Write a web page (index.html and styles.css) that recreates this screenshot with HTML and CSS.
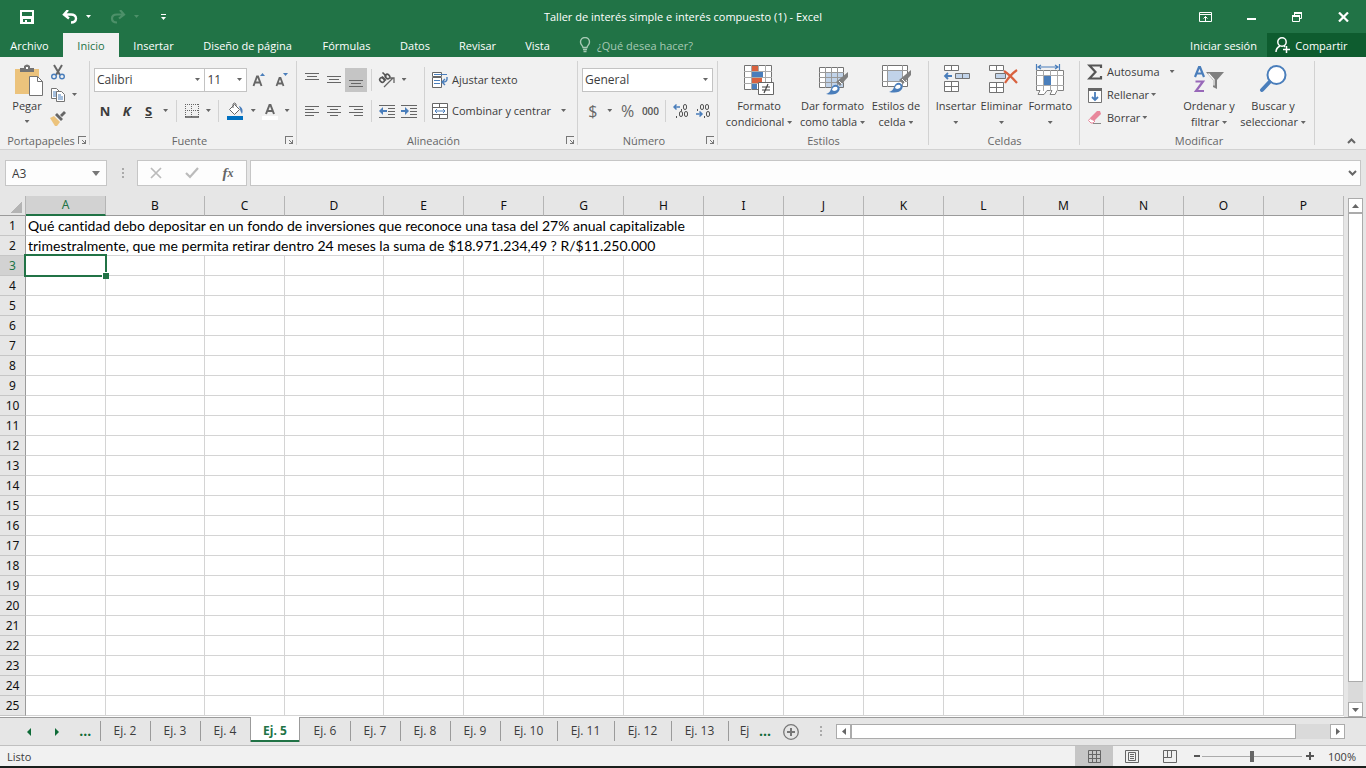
FILE: index.html
```html
<!DOCTYPE html>
<html lang="es">
<head>
<meta charset="utf-8">
<title>Taller de interés simple e interés compuesto (1) - Excel</title>
<link rel="stylesheet" href="styles.css">
</head>
<body>
<div class="app">
  <header class="titlebar">
    <div class="quick">
      <button class="q-save" aria-label="Guardar"><svg width="16" height="16" viewBox="0 0 16 16"><path d="M1 1h14v14H1z" fill="#fff"/><path d="M3 3h10v4H3zM4 10h8v3H4z" fill="#217346"/><path d="M6 11h2v2H6z" fill="#fff"/></svg></button>
      <button class="q-undo" aria-label="Deshacer"><svg width="16" height="14" viewBox="0 0 16 14"><path d="M6 0L2 4.500l5 4M2 4.500h7c3 0 5 1.500 5 4s-2 4-5 4" fill="none" stroke="#fff" stroke-width="2.400"/></svg></button>
      <button class="q-caret" aria-label="Opciones de deshacer"><svg width="5" height="3" viewBox="0 0 5 3"><path d="M0 0h5L2.500 3z" fill="#fff"/></svg></button>
      <button class="q-redo" aria-label="Rehacer"><svg width="16" height="14" viewBox="0 0 16 14"><path d="M10 0l4 4.500-5 4M14 4.500H7c-3 0-5 1.500-5 4s2 4 5 4" fill="none" stroke="#4d9069" stroke-width="2.200"/></svg></button>
      <button class="q-caret" aria-label="Opciones de rehacer"><svg width="5" height="3" viewBox="0 0 5 3"><path d="M0 0h5L2.500 3z" fill="#4d9069"/></svg></button>
      <button class="q-more" aria-label="Personalizar"><svg width="7" height="8" viewBox="0 0 7 8"><path d="M1 1.500h5" stroke="#fff"/><path d="M1 4h5L3.500 7z" fill="#fff"/></svg></button>
    </div>
    <h1 class="doc-title">Taller de interés simple e interés compuesto (1) - Excel</h1>
    <div class="window-buttons">
      <button aria-label="Opciones de la cinta"><svg width="13" height="10" viewBox="0 0 13 10"><path d="M.5 .5h12v9H.5zM0 2.500h13M6.500 9V4.500M4.500 6.500l2-2 2 2" fill="none" stroke="#fff"/></svg></button>
      <button aria-label="Minimizar"><svg width="9" height="10" viewBox="0 0 9 10"><path d="M0 6h9v2H0z" fill="#fff"/></svg></button>
      <button aria-label="Restaurar"><svg width="10" height="10" viewBox="0 0 10 10"><path d="M2.500 3V.5h7v6H7.500M.5 3.500h7v6H.5z" fill="none" stroke="#fff"/><path d="M2 1h8M0 4h8" stroke="#fff" stroke-width="2"/></svg></button>
      <button aria-label="Cerrar"><svg width="11" height="10" viewBox="0 0 11 10"><path d="M1 .5l9 9M10 .5l-9 9" stroke="#fff" stroke-width="2.200"/></svg></button>
    </div>
  </header>

  <nav class="tabs">
    <button class="tab tab-file">Archivo</button>
    <button class="tab tab-active">Inicio</button>
    <button class="tab tab-insert">Insertar</button>
    <button class="tab tab-layout">Diseño de página</button>
    <button class="tab tab-formulas">Fórmulas</button>
    <button class="tab tab-data">Datos</button>
    <button class="tab tab-review">Revisar</button>
    <button class="tab tab-view">Vista</button>
    <button class="tell-me"><svg width="12" height="16" viewBox="0 0 12 16"><path d="M4 10.500C4 8.500 1.500 8 1.500 5a4.500 4.500 0 0 1 9 0c0 3-2.500 3.500-2.500 5.500zM4 12.500h4M4.500 14.500h3" fill="none" stroke="#a6c9b4" stroke-width="1.400"/></svg>¿Qué desea hacer?</button>
    <button class="sign-in">Iniciar sesión</button>
    <button class="share"><svg width="15" height="16" viewBox="0 0 15 16"><circle cx="7" cy="5" r="4.200" fill="none" stroke="#fff" stroke-width="1.500"/><path d="M1 15c0-3 2-5 4-6M9 9l1 1M8 12.500h7M11.500 9v7" fill="none" stroke="#fff" stroke-width="1.500"/></svg>Compartir</button>
  </nav>

  <section class="ribbon">
    <div class="group g-clip">
      <div class="body">
        <button class="big paste"><svg width="32" height="32" viewBox="0 0 32 32"><path d="M4 5h24v25H4z" fill="#ecc37c"/><path d="M9 8V4h4V2q3-3 6 0v2h4v4z" fill="#737373"/><path d="M15 3h2v2h-2z" fill="#fff"/><path d="M18.500 12.500h8l5 5v14h-13z" fill="#fff" stroke="#737373"/><path d="M26.500 12.500v5h5" fill="none" stroke="#737373"/></svg><span>Pegar</span><i class="caret"></i></button>
        <div class="clip-tools">
          <button aria-label="Cortar"><svg width="16" height="16" viewBox="0 0 16 16"><path d="M4 1l6 10M12 1L6 11" stroke="#666" stroke-width="2"/><circle cx="4" cy="12.500" r="2.300" fill="none" stroke="#4a7ebb" stroke-width="1.400"/><circle cx="12" cy="12.500" r="2.300" fill="none" stroke="#4a7ebb" stroke-width="1.400"/></svg></button>
          <button aria-label="Copiar"><svg width="16" height="16" viewBox="0 0 16 16"><path d="M1.500 1.500h5l3 3v7h-8z" fill="#fff" stroke="#737373"/><path d="M3 5h4M3 7h4M3 9h4" stroke="#4a7ebb"/><path d="M6.500 4.500h5l3 3v7h-8z" fill="#fff" stroke="#737373"/><path d="M8 8h3M8 10h5M8 12h5" stroke="#4a7ebb"/></svg><i class="caret"></i></button>
          <button aria-label="Copiar formato"><svg width="16" height="16" viewBox="0 0 16 16"><path d="M0 8l4-2 6 6-3 4H5z" fill="#ecc37c"/><path d="M5 5l2-2 6 6-2 2zM10 5l4-4 2 2-4 4z" fill="#666"/></svg></button>
        </div>
      </div>
      <div class="foot"><span>Portapapeles</span><button class="launch" aria-label="Opciones de portapapeles"></button></div>
    </div>

    <div class="group g-font">
      <div class="body rows">
        <div class="row">
          <select class="sel sel-font" aria-label="Fuente"><option>Calibri</option></select>
          <select class="sel sel-size" aria-label="Tamaño"><option>11</option></select>
          <button class="w24" aria-label="Aumentar tamaño"><svg width="16" height="16" viewBox="0 0 16 16"><path d="M2.500 14L6 4.500h1L10.500 14M4 10.500h5" fill="none" stroke="#666" stroke-width="1.900"/><path d="M9 4l2.500-3L14 4z" fill="#4a7ebb"/></svg></button>
          <button class="w22" aria-label="Disminuir tamaño"><svg width="16" height="16" viewBox="0 0 16 16"><path d="M2.500 14L5.500 6h1l3 8M4 11.500h4" fill="none" stroke="#666" stroke-width="1.800"/><path d="M9 1h5l-2.500 3z" fill="#4a7ebb"/></svg></button>
        </div>
        <div class="row">
          <button class="w22 fmt"><b>N</b></button>
          <button class="w22 fmt"><b><em>K</em></b></button>
          <button class="w22 fmt"><b><u>S</u></b></button>
          <button class="w12" aria-label="Subrayado"><i class="caret"></i></button>
          <i class="vsep"></i>
          <button class="w22" aria-label="Bordes"><svg width="14" height="14" viewBox="0 0 14 14"><path d="M.5 0v13M13.500 0v13M6.500 0v13M0 .5h14M0 6.500h14" stroke="#666" stroke-dasharray="1 1"/><path d="M0 13h14" stroke="#555" stroke-width="1.500"/></svg></button>
          <button class="w12" aria-label="Más bordes"><i class="caret"></i></button>
          <i class="vsep"></i>
          <button class="w24" aria-label="Color de relleno"><svg width="16" height="18" viewBox="0 0 16 18"><path d="M2.500 7.500l5-5 5 5-5 5z" fill="#fff" stroke="#666"/><path d="M6 6V2q1.500-2 3 0v2" fill="none" stroke="#666"/><path d="M12 4q5 2 3 8-2-3-2-5z" fill="#4a7ebb"/><path d="M0 14h16v4H0z" fill="#0070c0"/></svg></button>
          <button class="w12" aria-label="Más rellenos"><i class="caret"></i></button>
          <button class="w22" aria-label="Color de fuente"><svg width="16" height="18" viewBox="0 0 16 18"><path d="M4 12L7.500 3h1L12 12M5.500 9h5" fill="none" stroke="#666" stroke-width="2"/><path d="M0 14h16v4H0z" fill="#fff"/></svg></button>
          <button class="w12" aria-label="Más colores"><i class="caret"></i></button>
        </div>
      </div>
      <div class="foot"><span>Fuente</span><button class="launch" aria-label="Opciones de fuente"></button></div>
    </div>

    <div class="group g-align">
      <div class="body">
        <div class="rows">
          <div class="row">
            <button class="w22" aria-label="Alinear arriba"><svg width="14" height="14" viewBox="0 0 14 14"><path d="M0 .5h14M2 3.500h10M0 6.500h14" stroke="#666"/></svg></button>
            <button class="w22" aria-label="Alinear al medio"><svg width="14" height="14" viewBox="0 0 14 14"><path d="M0 3.500h14M2 6.500h10M0 9.500h14" stroke="#666"/></svg></button>
            <button class="w22 pressed" aria-label="Alinear abajo"><svg width="14" height="14" viewBox="0 0 14 14"><path d="M0 7.500h14M2 10.500h10M0 13.500h14" stroke="#666"/></svg></button>
            <i class="vsep"></i>
            <button class="w22" aria-label="Orientación"><svg width="18" height="16" viewBox="0 0 18 16"><g fill="none" stroke="#555" stroke-width="1.600"><ellipse cx="4" cy="8" rx="2" ry="2.500" transform="rotate(-45 4 8)"/><path d="M4 4.500l4 4"/><ellipse cx="9.500" cy="4.500" rx="2" ry="2.500" transform="rotate(-45 9.500 4.500)"/><path d="M4.500 .5l4 4"/></g><path d="M6 15L15 6M11 6h5v5" fill="none" stroke="#666" stroke-width="1.300"/></svg></button>
            <button class="w12" aria-label="Más orientaciones"><i class="caret"></i></button>
          </div>
          <div class="row">
            <button class="w22" aria-label="Izquierda"><svg width="14" height="12" viewBox="0 0 14 12"><path d="M0 1.500h14M0 4.500h9M0 7.500h14M0 10.500h9" stroke="#666"/></svg></button>
            <button class="w22" aria-label="Centrar"><svg width="14" height="12" viewBox="0 0 14 12"><path d="M0 1.500h14M3 4.500h8M0 7.500h14M3 10.500h8" stroke="#666"/></svg></button>
            <button class="w22" aria-label="Derecha"><svg width="14" height="12" viewBox="0 0 14 12"><path d="M0 1.500h14M5 4.500h9M0 7.500h14M5 10.500h9" stroke="#666"/></svg></button>
            <i class="vsep"></i>
            <button class="w22" aria-label="Disminuir sangría"><svg width="16" height="14" viewBox="0 0 16 14"><path d="M0 1.500h16M9 4.500h7M9 7.500h7M9 10.500h7M0 13.500h16" stroke="#666"/><path d="M4 3L0 7l4 4V8h4V6H4z" fill="#4a7ebb"/></svg></button>
            <button class="w22" aria-label="Aumentar sangría"><svg width="16" height="14" viewBox="0 0 16 14"><path d="M0 1.500h16M9 4.500h7M9 7.500h7M9 10.500h7M0 13.500h16" stroke="#666"/><path d="M4 3l4 4-4 4V8H0V6h4z" fill="#4a7ebb"/></svg></button>
          </div>
        </div>
        <i class="vsep tall"></i>
        <div class="rows wide">
          <button class="row lab"><svg width="16" height="16" viewBox="0 0 16 16"><path d="M.5 .5h9v4h-9zM.5 5.500h9v10h-9z" fill="#fff" stroke="#666"/><path d="M2 2.500h13M2 8.500h6M2 11.500h6" stroke="#4a7ebb"/><path d="M15 5v2q0 3-4 3M13 7l-3 3 3 3" fill="none" stroke="#4a7ebb" stroke-width="1.400"/></svg>Ajustar texto</button>
          <button class="row lab"><svg width="16" height="16" viewBox="0 0 16 16"><path d="M.5 .5h15v15H.5z" fill="#fff" stroke="#666"/><path d="M0 4.500h16M0 11.500h16M7.500 0v4.500M7.500 11.500V16" stroke="#666"/><path d="M3 8h10M5 6L3 8l2 2M11 6l2 2-2 2" fill="none" stroke="#4a7ebb"/></svg>Combinar y centrar<i class="caret far"></i></button>
        </div>
      </div>
      <div class="foot"><span>Alineación</span><button class="launch" aria-label="Opciones de alineación"></button></div>
    </div>

    <div class="group g-num">
      <div class="body rows">
        <div class="row"><select class="sel sel-num" aria-label="Formato de número"><option>General</option></select></div>
        <div class="row">
          <button class="w22 sym">$</button>
          <button class="w12" aria-label="Más monedas"><i class="caret"></i></button>
          <button class="w24 sym">%</button>
          <button class="w22 thousands">000</button>
          <i class="vsep"></i>
          <button class="w22" aria-label="Aumentar decimales"><svg width="16" height="16" viewBox="0 0 16 16"><path d="M1 4h6M3.500 1.500L1 4l2.500 2.500" fill="none" stroke="#4a7ebb" stroke-width="1.500"/><g fill="none" stroke="#555"><rect x="10.500" y="1.500" width="3" height="5" rx="1.500"/><rect x="6.500" y="8.500" width="3" height="5" rx="1.500"/><rect x="11.500" y="8.500" width="3" height="5" rx="1.500"/><path d="M8.500 6v2M3.500 13v2"/></g></svg></button>
          <button class="w22" aria-label="Disminuir decimales"><svg width="16" height="16" viewBox="0 0 16 16"><path d="M1 11h6M4.500 8.500L7 11l-2.500 2.500" fill="none" stroke="#4a7ebb" stroke-width="1.500"/><g fill="none" stroke="#555"><rect x="5.500" y="1.500" width="3" height="5" rx="1.500"/><rect x="10.500" y="1.500" width="3" height="5" rx="1.500"/><rect x="11.500" y="8.500" width="3" height="5" rx="1.500"/><path d="M2.500 6v2M9.500 13v2"/></g></svg></button>
        </div>
      </div>
      <div class="foot"><span>Número</span><button class="launch" aria-label="Opciones de número"></button></div>
    </div>

    <div class="group g-styles">
      <div class="body">
        <button class="big w74"><svg width="32" height="32" viewBox="0 0 32 32"><path d="M1.500 1.500h27v24h-27z" fill="#fff" stroke="#737373"/><path d="M1 7.500h28M1 13.500h28M1 19.500h28M8.500 1v25M15.500 1v25M22.500 1v25" stroke="#aaa"/><path d="M9 2h6v5H9zM9 14h10v5H9z" fill="#d9623f"/><path d="M9 8h11v5H9zM9 20h5v5H9z" fill="#4a7ebb"/><path d="M15.500 18.500h15v12h-15z" fill="#fff" stroke="#666"/><path d="M19 23h8M19 26h8M25 20l-4 9" stroke="#444" stroke-width="1.200"/></svg><span>Formato<br>condicional <i class="caret"></i></span></button>
        <button class="big w73"><svg width="32" height="32" viewBox="0 0 32 32"><path d="M2.500 3.500h24v20h-24z" fill="#fff" stroke="#737373"/><path d="M8 9h18v14H8z" fill="#c1d3e9"/><path d="M2 8.500h25M2 13.500h25M2 18.500h25M8.500 3v21M14.500 3v21M20.500 3v21" stroke="#999"/><path d="M31 8v5l-8 9-4-4z" fill="#808080"/><path d="M22 17l3 3" stroke="#fff"/><path d="M9 30q4-1 5-5 2-5 6-4 4 2 2 6-3 5-13 3z" fill="#4a7ebb"/><path d="M15 26q1-4 5-3 2 3-3 4z" fill="#fff"/></svg><span>Dar formato<br>como tabla <i class="caret"></i></span></button>
        <button class="big w54"><svg width="32" height="32" viewBox="0 0 32 32"><path d="M2.500 1.500h25v21h-25z" fill="#fff" stroke="#737373"/><path d="M2 6.500h26M2 17.500h26M7.500 1v22M22.500 1v22" stroke="#999"/><path d="M8 7h14v10H8z" fill="#c1d3e9"/><path d="M31 6v5l-8 9-4-4z" fill="#808080"/><path d="M22 15l3 3" stroke="#fff"/><path d="M9 28q4-1 5-5 2-5 6-4 4 2 2 6-3 5-13 3z" fill="#4a7ebb"/><path d="M15 24q1-4 5-3 2 3-3 4z" fill="#fff"/></svg><span>Estilos de<br>celda <i class="caret"></i></span></button>
      </div>
      <div class="foot"><span>Estilos</span></div>
    </div>

    <div class="group g-cells">
      <div class="body">
        <button class="big w46"><svg width="32" height="32" viewBox="0 0 32 32"><path d="M4.500 1.500h14v5h-14zM11.500 1v6M4.500 17.500h14v10h-14zM11.500 17v11M4 22.500h15" fill="#fff" stroke="#737373"/><path d="M15.500 9.500h14v5h-14zM22.500 9v6" fill="#c1d3e9" stroke="#737373"/><path d="M5 12h7M8 9l-3 3 3 3" fill="none" stroke="#4a7ebb" stroke-width="1.800"/></svg><span>Insertar<br><i class="caret"></i></span></button>
        <button class="big w46"><svg width="32" height="32" viewBox="0 0 32 32"><path d="M3.500 1.500h14v5h-14zM10.500 1v6M3.500 18.500h14v10h-14zM10.500 18v11M3 23.500h15" fill="#fff" stroke="#737373"/><path d="M9.500 9.500h10v5h-10z" fill="#c1d3e9" stroke="#737373"/><path d="M18 7q6 4 13 12M31 6q-7 5-12 13" fill="none" stroke="#d9623f" stroke-width="2.200"/></svg><span>Eliminar<br><i class="caret"></i></span></button>
        <button class="big w52"><svg width="32" height="32" viewBox="0 0 32 32"><path d="M2.500 6.500h27v20H23l-2 4h-5l2-4h-5l-3 4H4l2-4H2.500z" fill="#fff" stroke="#808080"/><path d="M2 11.500h28M2 21.500h28M9.500 6v21M16.500 6v21M23.500 6v21" stroke="#aaa"/><path d="M10 12h7v9h-7z" fill="#4a7ebb"/><path d="M2.500 0v6M25.500 0v6M4 3h20M7 1L4 3l3 2M21 1l3 2-3 2" fill="none" stroke="#4a7ebb" stroke-width="1.200"/></svg><span>Formato<br><i class="caret"></i></span></button>
      </div>
      <div class="foot"><span>Celdas</span></div>
    </div>

    <div class="group g-edit">
      <div class="body">
        <div class="edit-list">
          <button><svg width="16" height="16" viewBox="0 0 16 16"><path d="M14 4V1.500H2.500L8.500 8l-6 6.500H14V12" fill="none" stroke="#555" stroke-width="2.200"/></svg>Autosuma<i class="caret far"></i></button>
          <button><svg width="16" height="16" viewBox="0 0 16 16"><path d="M1.500 1.500h13v14h-13z" fill="#fff" stroke="#737373"/><path d="M1 1h14v3H1z" fill="#666"/><path d="M8 5v8M5 10l3 3 3-3" fill="none" stroke="#4a7ebb" stroke-width="1.800"/></svg>Rellenar<i class="caret"></i></button>
          <button><svg width="16" height="16" viewBox="0 0 16 16"><path d="M3 8l7-7h3l1 3-7 7z" fill="#e8879b"/><path d="M3 8.500L1.500 10.500 4 13h2l2-2z" fill="#fff" stroke="#e8879b"/><path d="M6 13.500h8" stroke="#888"/></svg>Borrar<i class="caret"></i></button>
        </div>
        <button class="big w58"><svg width="32" height="32" viewBox="0 0 32 32"><path d="M2 13L6 3h1l4 10M3.500 9.500h6" fill="none" stroke="#4a7ebb" stroke-width="2.200"/><path d="M2.500 17.500h7.500L3 27h8" fill="none" stroke="#9868b9" stroke-width="2.200"/><path d="M13 8h18l-7 8v9l-4-2v-7z" fill="#808080"/><path d="M15.500 9.500l5.500 6v6" fill="none" stroke="#fff" stroke-width="1.200"/></svg><span>Ordenar y<br>filtrar <i class="caret"></i></span></button>
        <button class="big w70"><svg width="32" height="32" viewBox="0 0 32 32"><circle cx="19.500" cy="11" r="9" fill="#fff" stroke="#4a7ebb" stroke-width="2"/><path d="M12.500 18L5 26" stroke="#4a7ebb" stroke-width="4" stroke-linecap="round"/></svg><span>Buscar y<br>seleccionar <i class="caret"></i></span></button>
      </div>
      <div class="foot"><span>Modificar</span></div>
    </div>
    <button class="collapse" aria-label="Contraer la cinta"><svg width="9" height="6" viewBox="0 0 9 6"><path d="M1 5l3.500-3.500L8 5" fill="none" stroke="#666" stroke-width="2"/></svg></button>
  </section>

  <section class="formula">
    <div class="name-box"><input aria-label="Cuadro de nombres" value="A3"><button aria-label="Nombres"><svg width="8" height="5" viewBox="0 0 8 5"><path d="M0 0h8L4 5z" fill="#777"/></svg></button></div>
    <i class="dots"></i>
    <div class="fx">
      <button aria-label="Cancelar"><svg width="12" height="12" viewBox="0 0 12 12"><path d="M1 1l10 10M11 1L1 11" stroke="#bbb" stroke-width="1.700"/></svg></button>
      <button aria-label="Introducir"><svg width="14" height="12" viewBox="0 0 14 12"><path d="M1 6l4 4 8-9" fill="none" stroke="#bbb" stroke-width="2.200"/></svg></button>
      <button class="fx-btn" aria-label="Insertar función"><i>f</i><small>x</small></button>
    </div>
    <div class="formula-input"><input aria-label="Barra de fórmulas"><button aria-label="Expandir"><svg width="9" height="6" viewBox="0 0 9 6"><path d="M1 1l3.500 3.500L8 1" fill="none" stroke="#666" stroke-width="2"/></svg></button></div>
  </section>

  <main class="sheet">
    <div class="grid-area">
      <table class="grid">
        <colgroup id="cols"></colgroup>
        <thead><tr id="letters"></tr></thead>
        <tbody id="cells"></tbody>
      </table>
    </div>
    <div class="vscroll">
      <button aria-label="Subir"><svg width="7" height="4" viewBox="0 0 7 4"><path d="M0 4h7L3.500 0z" fill="#666"/></svg></button>
      <div class="vtrack"><div class="vthumb"></div></div>
      <button aria-label="Bajar"><svg width="7" height="4" viewBox="0 0 7 4"><path d="M0 0h7L3.500 4z" fill="#666"/></svg></button>
    </div>
  </main>

  <footer class="sheetbar">
    <div class="nav">
      <button aria-label="Hoja anterior"><svg width="4" height="8" viewBox="0 0 4 8"><path d="M4 0v8L0 4z" fill="#0e6b37"/></svg></button>
      <button aria-label="Hoja siguiente"><svg width="4" height="8" viewBox="0 0 4 8"><path d="M0 0v8l4-4z" fill="#0e6b37"/></svg></button>
      <button class="more">...</button>
    </div>
    <div class="sheets">
      <button>Ej. 2</button><button>Ej. 3</button><button>Ej. 4</button><button class="current">Ej. 5</button><button>Ej. 6</button><button>Ej. 7</button><button>Ej. 8</button><button>Ej. 9</button><button class="long">Ej. 10</button><button class="long">Ej. 11</button><button class="long">Ej. 12</button><button class="long">Ej. 13</button><button class="cut">Ej</button>
    </div>
    <button class="more after">...</button>
    <button class="add" aria-label="Hoja nueva"><svg width="16" height="16" viewBox="0 0 16 16"><circle cx="8" cy="8" r="7.300" fill="none" stroke="#777" stroke-width="1.300"/><path d="M4 8h8M8 4v8" stroke="#777" stroke-width="2"/></svg></button>
    <i class="dots"></i>
    <div class="hscroll">
      <button aria-label="Izquierda"><svg width="4" height="7" viewBox="0 0 4 7"><path d="M4 0v7L0 3.500z" fill="#666"/></svg></button>
      <div class="htrack"><div class="hthumb"></div></div>
      <button aria-label="Derecha"><svg width="4" height="7" viewBox="0 0 4 7"><path d="M0 0v7l4-3.500z" fill="#666"/></svg></button>
    </div>
  </footer>

  <footer class="status">
    <span class="ready">Listo</span>
    <button class="view on" aria-label="Normal"><svg width="13" height="13" viewBox="0 0 13 13"><path d="M.5 .5h12v12H.5zM4.500 0v13M8.500 0v13M0 4.500h13M0 8.500h13" fill="none" stroke="#666"/></svg></button>
    <button class="view" aria-label="Diseño de página"><svg width="14" height="13" viewBox="0 0 14 13"><path d="M.5 .5h13v12H.5zM3.500 2.500h7v8h-7zM5 4.500h4M5 6.500h4M5 8.500h4" fill="none" stroke="#666"/></svg></button>
    <button class="view" aria-label="Saltos de página"><svg width="14" height="13" viewBox="0 0 14 13"><path d="M.5 .5h13v12H.5zM.5 7.500h8V0M4.500 0v7" fill="none" stroke="#666"/></svg></button>
    <button class="zoom-step" aria-label="Alejar"><svg width="7" height="8" viewBox="0 0 7 8"><path d="M0 4h6" stroke="#555" stroke-width="2"/></svg></button>
    <input class="zoom" type="range" min="0" max="100" value="50" aria-label="Zoom">
    <button class="zoom-step" aria-label="Acercar"><svg width="8" height="8" viewBox="0 0 8 8"><path d="M0 4h8M4 0v8" stroke="#555" stroke-width="2"/></svg></button>
    <button class="percent">100%</button>
  </footer>
  <div class="edge"></div>
</div>
<script src="sheet.js"></script>
</body>
</html>
```
FILE: styles.css
```css
* { box-sizing: border-box; }
body { margin: 0; background: #e6e6e6; }
body, button, input, select { font-family: "Open Sans", "Noto Sans", sans-serif; font-size: 11px; color: #3c3c3c; }
button { display: flex; align-items: center; justify-content: center; margin: 0; padding: 0; border: 0; background: none; white-space: nowrap; }
svg { display: block; flex: none; }
.app { display: flex; flex-direction: column; height: 100vh; min-width: 1344px; overflow: hidden; }

.titlebar { display: grid; grid-template-columns: 1fr auto 1fr; align-items: center; height: 33px; background: #217346; }
.quick { display: flex; align-items: center; height: 30px; padding-left: 19px; }
.q-undo { margin-left: 27px; }
.q-caret { margin-left: 8px; }
.q-redo { margin-left: 19px; }
.q-more { margin-left: 21px; }
.doc-title { margin: 0; font-size: 11px; font-weight: 400; color: #fff; line-height: 33px; }
.window-buttons { display: flex; justify-content: flex-end; height: 30px; }
.window-buttons button { width: 46px; }

.tabs { display: flex; height: 24px; background: #217346; }
.tab, .sign-in { color: #fff; }
.tab-file { width: 63px; padding-right: 4px; }
.tab-active { width: 56px; background: #f1f1f1; color: #217346; }
.tab-insert { width: 69px; }
.tab-layout { width: 119px; }
.tab-formulas { width: 79px; }
.tab-data { width: 58px; }
.tab-review { width: 67px; }
.tab-view { width: 53px; }
.tell-me { gap: 6px; margin-left: 15px; color: #a6c9b4; }
.sign-in { margin-left: auto; padding: 0 10px; }
.share { gap: 5px; width: 99px; padding-right: 10px; background: #0e5c2f; color: #fff; }

.ribbon { display: flex; height: 93px; background: #f1f1f1; border-bottom: 1px solid #d2d2d2; }
.group { display: flex; flex-direction: column; flex: none; position: relative; padding: 3px 4px 1px; }
.group::after { content: ""; position: absolute; right: 0; top: 4px; bottom: 4px; width: 1px; background: #d2d2d2; }
.g-clip { width: 90px; }
.g-font { width: 207px; }
.g-align { width: 281px; }
.g-num { width: 140px; }
.g-styles { width: 211px; }
.g-cells { width: 151px; }
.g-edit { width: 235px; }
.body { display: flex; flex: 1; }
.foot { display: flex; align-items: center; height: 16px; color: #666; }
.foot span { flex: 1; text-align: center; }
.launch { position: relative; width: 8px; height: 8px; border: solid #777; border-width: 1px 0 0 1px; background: linear-gradient(#777, #777) 6px 3px / 1px 4px no-repeat, linear-gradient(#777, #777) 3px 6px / 4px 1px no-repeat, linear-gradient(45deg, transparent 44%, #777 44% 56%, transparent 56%) 3px 3px / 4px 4px no-repeat; }
.caret { display: inline-block; flex: none; width: 5px; height: 3px; background: #666; clip-path: polygon(0 0, 100% 0, 50% 100%); vertical-align: 2px; }
.rows { display: flex; flex-direction: column; gap: 6px; padding-top: 7px; }
.row { display: flex; align-items: center; height: 25px; }
.row > button { height: 24px; }
.w12 { width: 12px; }
.w22 { width: 22px; }
.w24 { width: 24px; }
.fmt { font-size: 13px; }
.sym { font-size: 16px; color: #666; }
.thousands { font-size: 10px; font-weight: 600; color: #555; }
.pressed { background: #c5c5c5; }
.vsep { flex: none; width: 1px; height: 22px; margin: 0 4px; background: #d2d2d2; }
.vsep.tall { height: 55px; margin: 7px 7px 0 4px; }
.sel { height: 24px; margin: 0; padding: 0 2px; border: 1px solid #c3c3c3; border-radius: 0; font-size: 12px; appearance: none; background: #fff url("data:image/svg+xml,%3Csvg xmlns='http://www.w3.org/2000/svg' width='5' height='3'%3E%3Cpath d='M0 0h5L2.500 3z' fill='%23666'/%3E%3C/svg%3E") right 4px center no-repeat; }
.sel-font { width: 112px; }
.sel-size { width: 43px; margin-left: -1px; }
.sel-num { width: 131px; }

.big { flex-direction: column; justify-content: flex-start; padding-top: 4px; line-height: 16px; }
.big span { padding-top: 2px; text-align: center; }
.paste { width: 46px; }
.paste .caret { margin-top: 6px; }
.clip-tools { display: flex; flex-direction: column; }
.clip-tools button { justify-content: flex-start; gap: 6px; height: 23px; }
.w46 { width: 46px; }
.w52 { width: 52px; }
.w54 { width: 54px; }
.w58 { width: 58px; }
.w70 { width: 70px; }
.w73 { width: 73px; }
.w74 { width: 74px; }
.wide { flex: 1; align-items: flex-start; }
.row.lab { gap: 4px; height: 25px; }
.far { margin-left: 6px; }
.g-edit { padding-left: 7px; }
.edit-list { width: 93px; }
.edit-list button { gap: 4px; height: 23px; }
.edit-list .caret { margin-left: -2px; }
.edit-list .caret.far { margin-left: 6px; }
.collapse { align-self: flex-end; width: 20px; height: 16px; margin-left: auto; margin-right: 5px; }

.formula { display: flex; align-items: center; height: 46px; padding: 0 5px; }
.name-box, .fx, .formula-input { display: flex; height: 26px; border: 1px solid #c6c6c6; background: #fdfdfd; }
.name-box { width: 102px; }
.formula input { flex: 1; min-width: 0; padding: 0 6px; border: 0; background: none; font-size: 12px; }
.name-box button { width: 20px; }
.dots { width: 3px; height: 11px; margin: 0 13px 0 14px; background: repeating-linear-gradient(#aaa 0 2px, transparent 2px 4px) center / 2px 100% no-repeat; }
.fx { width: 110px; margin-right: 3px; }
.fx button { width: 36px; }
.fx-btn { font-size: 15px; font-weight: 700; color: #666; }
.fx-btn i, .fx-btn small { font-family: "Liberation Serif", serif; font-style: italic; }
.fx-btn small { font-size: 12px; }
.formula-input { flex: 1; }
.formula-input button { width: 16px; }

.sheet { display: flex; flex: 1; min-height: 0; border-bottom: 1px solid #9b9b9b; }
.grid-area { flex: 1; overflow: hidden; background: linear-gradient(#e6e6e6 20px, #fff 20px); }
.grid { width: 1344px; table-layout: fixed; border-collapse: separate; border-spacing: 0; }
.c-head { width: 26px; }
.c-std { width: 80px; }
.c-wide { width: 99px; }
.grid th { padding: 0; font-family: "Noto Sans", sans-serif; font-size: 12px; font-weight: 400; color: #111; background: #e6e6e6; line-height: 19px; text-align: center; }
.grid thead th { height: 20px; border-right: 1px solid #b5b5b5; border-bottom: 1px solid #9b9b9b; }
.grid thead th:first-child { background: linear-gradient(135deg, transparent 50%, #b4b4b4 50%) 10px 5px / 12px 12px no-repeat #e6e6e6; }
.grid tbody th { height: 20px; padding-top: 1px; border-right: 1px solid #9b9b9b; border-bottom: 1px solid #c6c6c6; line-height: 18px; }
.grid td { position: relative; height: 20px; padding: 0 2px; border-right: 1px solid #d4d4d4; border-bottom: 1px solid #d4d4d4; background: #fff; font-family: Lato, "Open Sans", sans-serif; font-size: 14px; font-variant-ligatures: none; line-height: 19px; color: #000; white-space: nowrap; }
.grid thead th.picked { color: #217346; background: #d2d2d2; border-bottom: 2px solid #217346; line-height: 18px; }
.grid tbody th.picked { color: #217346; background: #d2d2d2; }
.cursor { position: absolute; inset: -2px; border: 2px solid #217346; z-index: 1; }
.cursor::after { content: ""; position: absolute; right: -4px; bottom: -4px; width: 6px; height: 6px; background: #217346; border: solid #fff; border-width: 1px 0 0 1px; }

.vscroll { display: flex; flex-direction: column; width: 22px; padding: 2px 3px 0 4px; }
.vscroll button, .hscroll button { flex: none; width: 15px; height: 15px; border: 1px solid #ababab; background: #fff; }
.vtrack { flex: 1; background: #dadada; }
.vthumb { height: 96%; border: 1px solid #ababab; background: #fff; }

.sheetbar { display: flex; align-items: center; height: 27px; padding-right: 21px; }
.nav { display: flex; width: 100px; padding-left: 15px; }
.nav button { width: 28px; }
.nav .more { width: 30px; }
.more { padding-bottom: 3px; font-weight: 700; color: #0e6b37; font-size: 14px; }
.sheets { display: flex; align-self: stretch; }
.sheets button { position: relative; width: 50px; height: 25px; font-size: 12px; }
.sheets button::before { content: ""; position: absolute; left: 0; top: 3px; bottom: 2px; width: 1px; background: #9b9b9b; }
.sheets .long { width: 57px; }
.sheets .cut { width: 24px; padding-left: 9px; }
.sheets .current { margin-top: -1px; padding-top: 1px; background: #fff; color: #217346; font-weight: 700; border: solid #9b9b9b; border-width: 0 1px; box-shadow: inset 0 -2px #217346; }
.sheets .current::before, .sheets .current + button::before { display: none; }
.after { width: 26px; }
.add { margin-left: 5px; }
.sheetbar .dots { margin: 0 14px 0 20px; }
.hscroll { display: flex; flex: 1; }
.htrack { flex: 1; background: #dadada; }
.hthumb { width: 93%; height: 15px; border: 1px solid #ababab; background: #fff; }

.status { display: flex; align-items: center; height: 21px; background: #f1f1f1; border-top: 1px solid #c0c0c0; }
.ready { flex: 1; padding-left: 7px; }
.view { width: 38px; height: 20px; }
.view.on { background: #c6c6c6; }
.zoom-step { width: 8px; margin-left: 4px; }
.zoom { width: 100px; height: 12px; margin: 0 0 0 1px; appearance: none; background: linear-gradient(#ababab, #ababab) center / 100% 1px no-repeat; }
.zoom::-webkit-slider-thumb { appearance: none; width: 4px; height: 11px; background: #666; }
.percent { width: 52px; padding-left: 4px; }
.edge { height: 2px; background: #1a1f1c; }
```
FILE: sheet.js
```js
const letters = "ABCDEFGHIJKLMNOP".split("");
const wideColumns = ["B", "D"];
const rowCount = 25;
const texts = {
  1: "Qué cantidad debo depositar en un fondo de inversiones que reconoce una tasa del 27% anual capitalizable",
  2: "trimestralmente, que me permita retirar dentro 24 meses la suma de $18.971.234,49 ? R/$11.250.000"
};
const selected = { column: "A", row: 3 };

document.getElementById("cols").innerHTML =
  '<col class="c-head">' +
  letters.map(l => `<col class="${wideColumns.includes(l) ? "c-wide" : "c-std"}">`).join("");

document.getElementById("letters").innerHTML =
  "<th></th>" +
  letters.map(l => `<th scope="col" class="${l === selected.column ? "picked" : ""}">${l}</th>`).join("");

let html = "";
for (let r = 1; r <= rowCount; r++) {
  html += `<tr><th scope="row" class="${r === selected.row ? "picked" : ""}">${r}</th>`;
  if (texts[r]) {
    html += `<td colspan="8">${texts[r]}</td>` + "<td></td>".repeat(8);
  } else {
    html += letters.map(l =>
      r === selected.row && l === selected.column ? '<td><div class="cursor"></div></td>' : "<td></td>"
    ).join("");
  }
  html += "</tr>";
}
document.getElementById("cells").innerHTML = html;
```
